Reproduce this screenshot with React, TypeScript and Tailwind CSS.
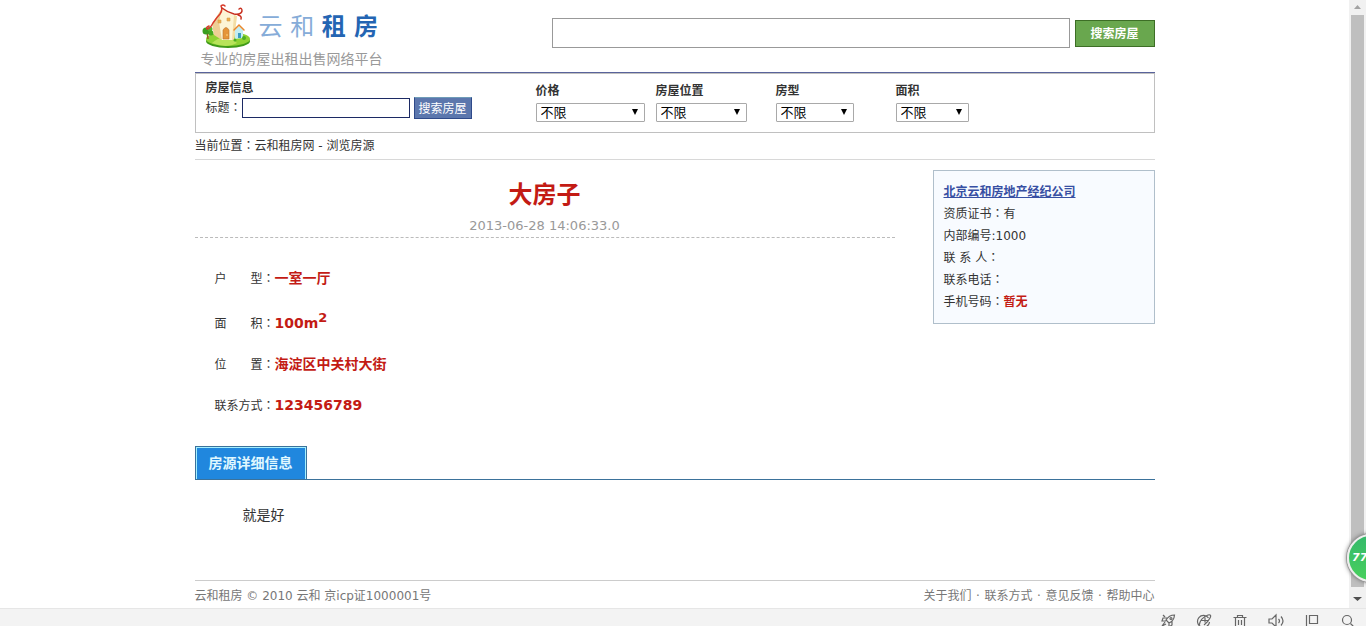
import type { ReactNode } from "react";

const filters = [
  { id: "price", label: "价格", width: "w-[109px]" },
  { id: "area", label: "房屋位置", width: "w-[91px]" },
  { id: "type", label: "房型", width: "w-[78px]" },
  { id: "size", label: "面积", width: "w-[73px]" },
];

const footerLinks = ["关于我们", "联系方式", "意见反馈", "帮助中心"];

// full-width colon, centred in its box
function Colon() {
  return <span className="font-['Noto_Sans_CJK_TC',sans-serif] leading-none">：</span>;
}

function HouseLogo() {
  return (
    <svg width="50" height="46" viewBox="0 0 50 46" aria-hidden="true">
      <ellipse cx="27" cy="38" rx="22" ry="7" fill="#3f9a18" />
      <ellipse cx="27" cy="36" rx="22" ry="7" fill="#8ed233" />
      <path d="M11 40q7-6 13-5 9 1 12 5-10 6-25 0z" fill="#b8e35a" />
      <path d="M7 36l-1-7M6 32l3-3" stroke="#9a5a20" strokeWidth="1.500" fill="none" />
      <circle cx="5" cy="28" r="3.500" fill="#3a9e20" />
      <circle cx="9" cy="26" r="2.500" fill="#54b52c" />
      <circle cx="10" cy="30" r="2.500" fill="#46a820" />
      <path d="M21 5L11 21l2 11 8 5z" fill="#edcf95" />
      <path d="M21 5q7 6 15 8l-3 24H21l-3-18z" fill="#fdf5d6" />
      <path d="M33 12l3 1-3 24h-2z" fill="#f3dda5" />
      <path
        d="M8 23Q5 24 6 26 9 26 12 20 16 14 19 11 22 7 20 3 22 1 24 3"
        fill="none"
        stroke="#d8392a"
        strokeWidth="1.500"
        strokeLinecap="round"
      />
      <path
        d="M21 5Q26 9 33 11 40 12 41 8 41 4 38 6M37 12q4 1 3 4"
        fill="none"
        stroke="#c8301f"
        strokeWidth="1.500"
        strokeLinecap="round"
      />
      <path
        d="M17 17h3v3h-3zM26 15h3v3h-3z"
        fill="#f0b04a"
        stroke="#d3a052"
        strokeWidth=".6"
      />
      <path d="M22 36v-9q3-5 6 0v9z" fill="#e5943a" stroke="#b8722c" strokeWidth=".6" />
      <circle cx="26" cy="32" r=".8" fill="#ffe08a" />
      <path d="M34 27l4-4 4 4v8l-8 1z" fill="#c2edf3" />
      <path
        d="M33 27l5-5 5 5"
        fill="none"
        stroke="#e9882c"
        strokeWidth="1.500"
        strokeLinecap="round"
      />
      <path d="M37 35v-5h3v5z" fill="#3c9cc0" />
      <circle cx="34" cy="37" r="1.500" fill="#4cae24" />
      <circle cx="43" cy="35" r="2" fill="#4cae24" />
    </svg>
  );
}

function Detail({ label, children }: { label: ReactNode; children: ReactNode }) {
  return (
    <div className="flex items-baseline leading-5">
      <dt className="flex w-[60px] items-baseline whitespace-nowrap">
        <span className="flex w-12 justify-between">{label}</span>
        <Colon />
      </dt>
      <dd className="text-sm leading-5 font-bold text-[#c31b14]">{children}</dd>
    </div>
  );
}

function Header() {
  return (
    <header className="flex h-[72px] justify-between">
      <a href="#" className="block pt-[3px] pl-[6px]">
        <span className="flex h-[46px] gap-2">
          <HouseLogo />
          <span className="text-2xl leading-12 text-[#86acd8]">
            云 和 <b className="text-[#2465b3]">租 房</b>
          </span>
        </span>
        <span className="block text-sm leading-5 text-[#999]">专业的房屋出租出售网络平台</span>
      </a>
      <form className="flex items-center gap-[5px] pb-[6px]">
        <input aria-label="搜索" className="h-[30px] w-[518px] border border-[#999] bg-white px-2" />
        <button
          type="button"
          className="h-[27px] w-20 border border-[#3d6e26] bg-[#69a74e] pt-px text-xs font-bold text-white"
        >
          搜索房屋
        </button>
      </form>
    </header>
  );
}

function FilterPanel() {
  return (
    <div className="border-t border-[#59639b]">
      <form className="flex h-[60px] border border-[#c0c0c0] pl-[10px]">
        <div className="w-[330px] pt-[5px]">
          <div className="leading-[18px] font-bold">房屋信息</div>
          <div className="flex items-center">
            <label htmlFor="title" className="leading-[18px]">
              标题
              <Colon />
            </label>
            <input id="title" className="h-5 w-[168px] border border-[#1c2a64] bg-white px-1" />
            <button
              type="button"
              className="ml-1 h-[22px] w-[58px] border border-[#2f4a8a] border-t-[#6f9cb8] bg-[#5c77ad] pt-px text-white"
            >
              搜索房屋
            </button>
          </div>
        </div>
        {filters.map((f) => (
          <div key={f.id} className="w-[120px] pt-2">
            <label htmlFor={f.id} className="block h-[21px] leading-[18px] font-bold">
              {f.label}
            </label>
            <div className={`relative ${f.width}`}>
              <select
                id={f.id}
                className="block h-[19px] w-full appearance-none rounded-[1px] border border-[#a9a9a9] bg-white pl-1 text-[13px] leading-[17px] text-black"
              >
                <option>不限</option>
              </select>
              <svg
                className="pointer-events-none absolute top-[6px] right-[7px]"
                width="6"
                height="6"
                viewBox="0 0 6 6"
                aria-hidden="true"
              >
                <path d="M0 0h6L3 6z" fill="#000" />
              </svg>
            </div>
          </div>
        ))}
      </form>
    </div>
  );
}

function CompanyCard() {
  return (
    <aside className="mt-[10px] w-[222px] self-start border border-[#b0bfcb] bg-[#f8fbff] p-[10px] leading-[22px]">
      <a href="#" className="block font-bold text-[#374fa3] underline">
        北京云和房地产经纪公司
      </a>
      <p>
        资质证书
        <Colon />有
      </p>
      <p>内部编号:1000</p>
      <p>
        联 系 人
        <Colon />
      </p>
      <p>
        联系电话
        <Colon />
      </p>
      <p>
        手机号码
        <Colon />
        <b className="text-[#c31b14]">暂无</b>
      </p>
    </aside>
  );
}

function Scrollbar() {
  return (
    <div className="flex w-[17px] shrink-0 flex-col items-center bg-[#f1f1f1]" aria-hidden="true">
      <svg width="17" height="15" viewBox="0 0 17 15">
        <path d="M5 9h7L8.500 5z" fill="#a3a3a3" />
      </svg>
      <div className="w-[13px] flex-1 bg-[#bfbfbf]" />
      <svg width="17" height="21" viewBox="0 0 17 21">
        <path d="M4 10h9l-4.500 4z" fill="#505050" />
      </svg>
    </div>
  );
}

function StatusIcon({ label, children }: { label: string; children: ReactNode }) {
  return (
    <button type="button" aria-label={label} className="h-4 w-4">
      <svg
        width="16"
        height="16"
        viewBox="0 0 16 16"
        fill="none"
        stroke="#666"
        strokeWidth="1.200"
      >
        {children}
      </svg>
    </button>
  );
}

function StatusBar() {
  return (
    <div className="flex h-[18px] shrink-0 justify-end gap-5 overflow-hidden border-t border-[#e6e6e6] bg-[#f3f3f3] pt-1 pr-[10px]">
      <StatusIcon label="加速">
        <path d="M14.500 2Q9 2 6 7l3 3q5-2 5.500-8zM7 5H3l-1 3h4M9 10v4l3-2V8M5 9l-3 4 4-2" />
        <circle cx="11" cy="5.500" r="1" />
        <path d="M3 2l2 2" />
      </StatusIcon>
      <StatusIcon label="浏览">
        <path d="M12.500 5a6 6 0 1 0 1 4M5 7.500h7M9 4.500v5M3 13Q4 5 12 2q4-1 2 3-2 4-6 7" />
      </StatusIcon>
      <StatusIcon label="清除">
        <path d="M1.500 4.500h13M5.500 4V2.500h5V4M3.500 4.500v10h9v-10M6.500 7v5M9.500 7v5" />
      </StatusIcon>
      <StatusIcon label="声音">
        <path d="M1 6h3l4-4v12l-4-4H1zM10.500 6q2 2 0 4M13 3.500q4 4.500 0 9" />
      </StatusIcon>
      <StatusIcon label="窗口">
        <path d="M2.500 2v12M5.500 2.500h8v8h-8z" />
      </StatusIcon>
      <StatusIcon label="缩放">
        <circle cx="7" cy="7" r="4.500" />
        <path d="M10.500 10.500l4 4" />
      </StatusIcon>
    </div>
  );
}

export default function App() {
  return (
    <div className="relative flex min-h-screen flex-col overflow-hidden bg-white font-['DejaVu_Sans','Noto_Sans_CJK_SC',sans-serif] text-xs text-[#333]">
      <div className="flex flex-1">
        <div className="min-w-0 flex-1">
          <div className="mx-auto max-w-[960px]">
            <Header />
            <FilterPanel />
            <nav className="h-[27px] border-b border-[#d8d8d8] leading-[26px]">
              当前位置
              <Colon />
              <a href="#">云和租房网</a> - <a href="#">浏览房源</a>
            </nav>

            <div className="flex justify-between">
              <main className="w-[700px]">
                <div className="border-b border-dashed border-[#bbb] pt-4 text-center">
                  <h1 className="h-9 text-2xl leading-[38px] font-bold text-[#c31b14]">大房子</h1>
                  <p className="h-[25px] text-[13px] leading-7 text-[#999]">
                    2013-06-28 14:06:33.0
                  </p>
                </div>
                <dl className="flex flex-col gap-5 px-5 pt-[30px]">
                  <Detail label={<><span>户</span><span>型</span></>}>一室一厅</Detail>
                  <div className="pt-1">
                    <Detail label={<><span>面</span><span>积</span></>}>
                      100m<sup className="text-[13px]">2</sup>
                    </Detail>
                  </div>
                  <Detail label={<><span>位</span><span>置</span></>}>海淀区中关村大街</Detail>
                  <Detail label="联系方式">123456789</Detail>
                </dl>
              </main>
              <CompanyCard />
            </div>

            <section className="mt-[30px]">
              <div className="flex border-b border-[#3b729b]">
                <h2 className="border border-b-0 border-[#3b729b] text-sm font-bold text-[#e0f8ff]">
                  <span className="block border border-b-0 border-[#a5f0ff] bg-[#2087de] px-3 leading-[31px]">
                    房源详细信息
                  </span>
                </h2>
              </div>
              <p className="h-[100px] px-12 pt-6 text-sm leading-[22px]">就是好</p>
            </section>

            <footer className="flex justify-between border-t border-[#ccc] pt-[3px] leading-6 text-[#777]">
              <span>云和租房 © 2010 云和 京icp证1000001号</span>
              <nav className="flex">
                {footerLinks.map((link, i) => (
                  <span key={link} className="flex">
                    {i > 0 && <span className="w-[13px] text-center">·</span>}
                    <a href="#">{link}</a>
                  </span>
                ))}
              </nav>
            </footer>
          </div>
        </div>
        <Scrollbar />
      </div>
      <StatusBar />

      {/* floating speed ball, half off the window */}
      <button
        type="button"
        className="absolute right-[-29px] bottom-[44px] h-12 w-12 rounded-full border-2 border-[#eee] bg-linear-to-b from-[#35b96a] to-[#48cf5c] pl-[3px] text-left text-[11px] font-bold text-white italic shadow-[0_0_5px_#555] ring-1 ring-[#999]"
      >
        77
      </button>
    </div>
  );
}
